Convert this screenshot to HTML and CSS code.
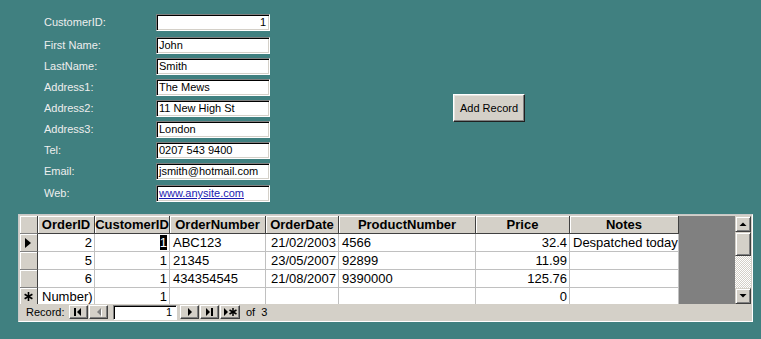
FILE: index.html
```html
<!DOCTYPE html>
<html>
<head>
<meta charset="utf-8">
<title>Customer</title>
<link rel="stylesheet" href="styles.css">
</head>
<body>
<div class="form">
  <div class="fields">
    <div class="row first"><span class="lbl">CustomerID:</span><span class="box num">1</span></div>
    <div class="row"><span class="lbl">First Name:</span><span class="box">John</span></div>
    <div class="row"><span class="lbl">LastName:</span><span class="box">Smith</span></div>
    <div class="row"><span class="lbl">Address1:</span><span class="box">The Mews</span></div>
    <div class="row"><span class="lbl">Address2:</span><span class="box">11 New High St</span></div>
    <div class="row"><span class="lbl">Address3:</span><span class="box">London</span></div>
    <div class="row"><span class="lbl">Tel:</span><span class="box">0207 543 9400</span></div>
    <div class="row"><span class="lbl">Email:</span><span class="box">jsmith@hotmail.com</span></div>
    <div class="row last"><span class="lbl">Web:</span><span class="box"><span class="link">www.anysite.com</span></span></div>
  </div>
  <button class="btn">Add Record</button>
</div>

<div class="sheet">
  <div class="sheet-body">
    <div class="grid">
      <div class="c sel h"></div>
      <div class="c h">OrderID</div>
      <div class="c h">CustomerID</div>
      <div class="c h">OrderNumber</div>
      <div class="c h">OrderDate</div>
      <div class="c h">ProductNumber</div>
      <div class="c h">Price</div>
      <div class="c h">Notes</div>
      <div class="filler"></div>

      <div class="c sel"><svg width="7" height="10" viewBox="0 0 7 10"><polygon points="0,0 6,5 0,10" fill="#000"/></svg></div>
      <div class="c r">2</div>
      <div class="c r"><span class="cur">1</span></div>
      <div class="c">ABC123</div>
      <div class="c r">21/02/2003</div>
      <div class="c">4566</div>
      <div class="c r">32.4</div>
      <div class="c">Despatched today</div>

      <div class="c sel"></div>
      <div class="c r">5</div>
      <div class="c r">1</div>
      <div class="c">21345</div>
      <div class="c r">23/05/2007</div>
      <div class="c">92899</div>
      <div class="c r">11.99</div>
      <div class="c"></div>

      <div class="c sel"></div>
      <div class="c r">6</div>
      <div class="c r">1</div>
      <div class="c">434354545</div>
      <div class="c r">21/08/2007</div>
      <div class="c">9390000</div>
      <div class="c r">125.76</div>
      <div class="c"></div>

      <div class="c sel"><svg width="9" height="9" viewBox="0 0 9 9"><g stroke="#000" stroke-width="1.6"><line x1="4.5" y1="0" x2="4.5" y2="9"/><line x1="0.6" y1="2.25" x2="8.4" y2="6.75"/><line x1="0.6" y1="6.75" x2="8.4" y2="2.25"/></g></svg></div>
      <div class="c new-id">Number)</div>
      <div class="c r">1</div>
      <div class="c"></div>
      <div class="c"></div>
      <div class="c"></div>
      <div class="c r">0</div>
      <div class="c"></div>
    </div>
    <div class="vscroll">
      <div class="sbtn"><svg width="14" height="14" viewBox="0 0 14 14"><polygon points="3.5,9 10.5,9 7,5.5" fill="#000"/></svg></div>
      <div class="thumb"></div>
      <div class="track"></div>
      <div class="sbtn"><svg width="14" height="14" viewBox="0 0 14 14"><polygon points="3.5,5 10.5,5 7,8.5" fill="#000"/></svg></div>
    </div>
  </div>
  <div class="nav">
    <span class="rec">Record:</span>
    <span class="nb"><svg width="17" height="12" viewBox="0 0 17 12"><rect x="4" y="2" width="2" height="8" fill="#000"/><polygon points="7,6 11,2 11,10" fill="#000"/></svg></span>
    <span class="nb"><svg width="17" height="12" viewBox="0 0 17 12"><polygon points="8,7 12,3 12,11" fill="#fff"/><polygon points="7,6 11,2 11,10" fill="#808080"/></svg></span>
    <span class="navbox">1</span>
    <span class="nb nb-next"><svg width="17" height="12" viewBox="0 0 17 12"><polygon points="7,2 11,6 7,10" fill="#000"/></svg></span>
    <span class="nb"><svg width="17" height="12" viewBox="0 0 17 12"><polygon points="5,2 9,6 5,10" fill="#000"/><rect x="10" y="2" width="2" height="8" fill="#000"/></svg></span>
    <span class="nb nb-new"><svg width="18" height="12" viewBox="0 0 18 12"><polygon points="3,2 7,6 3,10" fill="#000"/><g stroke="#000" stroke-width="1.5"><line x1="12" y1="2" x2="12" y2="10"/><line x1="8.5" y1="4" x2="15.5" y2="8"/><line x1="8.5" y1="8" x2="15.5" y2="4"/></g></svg></span>
    <span class="of">of&nbsp; 3</span>
  </div>
</div>
</body>
</html>
```

FILE: styles.css
```css
html, body {
  margin: 0;
  padding: 0;
}
body {
  width: 761px;
  height: 339px;
  overflow: hidden;
  background: #408080;
  font-family: "Liberation Sans", Arial, sans-serif;
  font-size: 11px;
}

/* ---- form ---- */
.form {
  display: flex;
  align-items: flex-start;
  padding: 14px 0 0 44px;
}
.fields {
  display: flex;
  flex-direction: column;
}
.row {
  display: flex;
  align-items: center;
  height: 17px;
  margin-top: 4px;
}
.row.first {
  margin-top: 0;
  margin-bottom: 2px;
}
.row.last {
  margin-top: 5px;
}
.lbl {
  width: 112px;
  color: #eeeeee;
  font-size: 11px;
  line-height: 17px;
}
.box {
  box-sizing: border-box;
  width: 114px;
  height: 17px;
  background: #fff;
  border: 1px solid;
  border-color: #808080 #fff #fff #808080;
  box-shadow: inset 1px 1px #000, inset -1px -1px #d4d0c8;
  padding: 0 3px 0 2px;
  line-height: 15px;
  font-size: 11px;
  color: #000;
  white-space: nowrap;
  overflow: hidden;
}
.box.num {
  text-align: right;
}
.link {
  color: #1a1ab0;
  text-decoration: underline;
}

.btn {
  box-sizing: border-box;
  margin: 80px 0 0 183px;
  width: 72px;
  height: 28px;
  padding: 0;
  background: #d4d0c8;
  border: 1px solid;
  border-color: #fff #202020 #202020 #fff;
  box-shadow: inset -1px -1px #808080, inset 1px 1px #e8e6e0;
  font-family: "Liberation Sans", Arial, sans-serif;
  font-size: 11px;
  color: #000;
}

/* ---- datasheet ---- */
.sheet {
  box-sizing: border-box;
  margin: 12px 0 0 18px;
  width: 735px;
  height: 108px;
  padding: 1px;
  border: 1px solid;
  border-color: #c8c8c8 #fff #fff #c8c8c8;
  background: #d4d0c8;
  display: flex;
  flex-direction: column;
}
.sheet-body {
  display: flex;
  height: 88px;
  overflow: hidden;
}
.grid {
  display: grid;
  grid-template-columns: 18px 57px 75px 96px 73px 137px 94px 109px 56px;
  grid-auto-rows: 18px;
  width: 715px;
  height: 88px;
  overflow: hidden;
}
.c {
  box-sizing: border-box;
  background: #fff;
  border-right: 1px solid #c0c0c0;
  border-bottom: 1px solid #c0c0c0;
  padding: 0 2px 0 3px;
  font-size: 13px;
  line-height: 17px;
  color: #000;
  white-space: nowrap;
  overflow: hidden;
}
.c.r {
  text-align: right;
}
.c.h {
  background: #d4d0c8;
  font-weight: bold;
  text-align: center;
  border-right-color: #404040;
  border-bottom-color: #404040;
  box-shadow: inset 1px 1px #fff;
  padding: 0;
}
.c.sel {
  background: #d4d0c8;
  border-right-color: #404040;
  border-bottom-color: #808080;
  box-shadow: inset 1px 1px #fff;
  padding: 0;
  display: flex;
  align-items: center;
  justify-content: center;
}
.c.new-id {
  padding-left: 4px;
}
.cur {
  background: #000;
  color: #fff;
}
.filler {
  grid-column: 9;
  grid-row: 1 / span 5;
  background: #808080;
}

.vscroll {
  width: 16px;
  height: 88px;
  display: flex;
  flex-direction: column;
}
.sbtn, .thumb {
  box-sizing: border-box;
  width: 16px;
  background: #d4d0c8;
  border: 1px solid;
  border-color: #d4d0c8 #404040 #404040 #d4d0c8;
  box-shadow: inset 1px 1px #fff, inset -1px -1px #808080;
}
.sbtn {
  height: 16px;
  display: flex;
  align-items: center;
  justify-content: center;
}
.thumb {
  height: 24px;
}
.track {
  flex: 1;
  background-color: #d4d0c8;
  background-image: conic-gradient(#fff 25%, #d4d0c8 0 50%, #fff 0 75%, #d4d0c8 0);
  background-size: 2px 2px;
}

/* ---- navigation bar ---- */
.nav {
  height: 16px;
  display: flex;
  align-items: center;
  padding-left: 6px;
  background: #d4d0c8;
  font-size: 11px;
  color: #000;
}
.rec {
  width: 43px;
}
.nb {
  box-sizing: border-box;
  width: 19px;
  height: 14px;
  margin-right: 1px;
  background: #d4d0c8;
  border: 1px solid;
  border-color: #fff #404040 #404040 #fff;
  box-shadow: inset -1px -1px #808080;
  display: flex;
  align-items: center;
  justify-content: center;
}
.nb svg {
  display: block;
}
.nb-new {
  width: 20px;
}
.navbox {
  box-sizing: border-box;
  width: 64px;
  height: 15px;
  margin: 0 3px 0 4px;
  background: #fff;
  border: 1px solid;
  border-color: #808080 #fff #fff #808080;
  box-shadow: inset 1px 1px #000;
  text-align: right;
  padding-right: 4px;
  line-height: 13px;
}
.of {
  margin-left: 5px;
}
```
